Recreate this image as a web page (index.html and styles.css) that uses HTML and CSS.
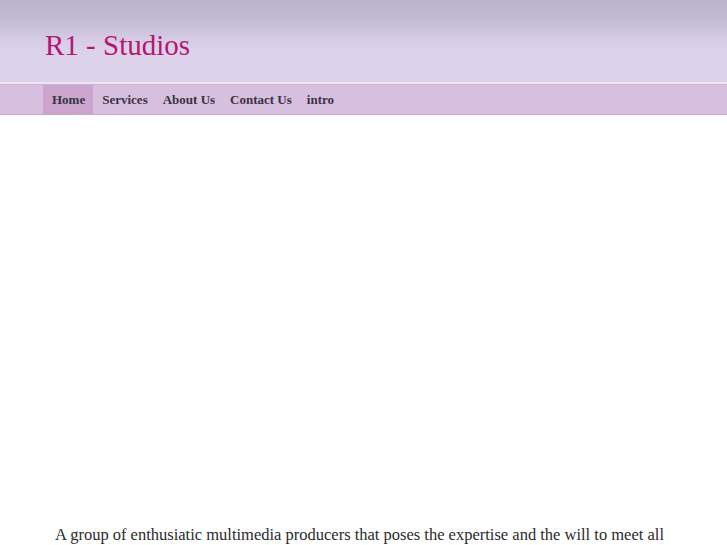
FILE: index.html
```html
<!DOCTYPE html>
<html>
<head>
<meta charset="utf-8">
<link rel="stylesheet" href="styles.css">
</head>
<body>
<div class="header">
  <div class="wrap">
    <h1 class="logo">R1 - Studios</h1>
  </div>
</div>
<div class="nav">
  <div class="wrap">
    <ul class="menu">
      <li class="active">Home</li>
      <li>Services</li>
      <li>About Us</li>
      <li>Contact Us</li>
      <li>intro</li>
    </ul>
  </div>
</div>
<div class="content">
  <div class="stage"></div>
  <p class="intro">A group of enthusiatic multimedia producers that poses the expertise and the will to meet all your needs.</p>
</div>
</body>
</html>
```
FILE: styles.css
```css
html, body {
  margin: 0;
  padding: 0;
  background: #ffffff;
  font-family: "Liberation Serif", "Times New Roman", serif;
  overflow: hidden;
}
.wrap {
  padding-left: 43px;
}
.header {
  height: 82px;
  background: linear-gradient(to bottom, #bab5cb 0px, #c0bad1 18px, #d4cae3 38px, #dcd2ea 50px, #dcd2ea 82px);
  border-bottom: 2px solid #ece6f4;
}
.logo {
  margin: 0;
  padding: 29px 0 0 2px;
  font-weight: normal;
  font-size: 29px;
  line-height: 32px;
  color: #b5166f;
}
.nav {
  height: 29px;
  background: #d7bfe0;
  border-top: 1px solid #cdb3d7;
  border-bottom: 1px solid #c5a6cf;
}
.menu {
  list-style: none;
  margin: 0;
  padding: 0;
  display: flex;
}
.menu li {
  font-weight: bold;
  font-size: 13px;
  line-height: 29px;
  color: #3b3340;
  padding: 0 7.5px;
}
.menu li.active {
  background: #cba5cd;
  padding: 0 8px 0 9px;
  margin-right: 1.5px;
}
.content {
  padding-left: 55px;
}
.stage {
  height: 410px;
}
.intro {
  margin: 0;
  font-size: 16.5px;
  line-height: 20px;
  color: #2b2b2b;
  width: 630px;
}
```
